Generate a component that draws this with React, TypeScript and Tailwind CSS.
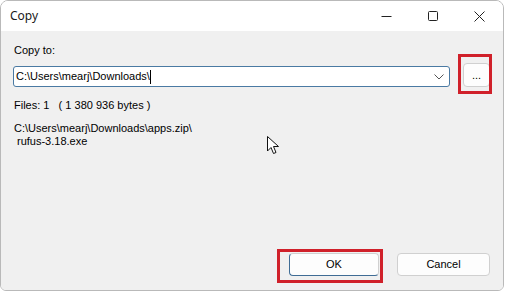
import React from "react";

export default function App() {
  const font = { fontFamily: '"Liberation Sans", Arial, sans-serif' };
  return (
    <div className="w-[506px] h-[292px] bg-white relative overflow-hidden" style={font}>
      <div className="absolute left-0 top-0 w-[504px] h-[291px] border border-[#b9b9b9] rounded-t-[8px] rounded-b-[6px] flex flex-col overflow-hidden">
        {/* title bar */}
        <div className="h-[30px] bg-white flex items-center shrink-0">
          <span className="ml-[9px] text-[12px] text-[#1a1a1a]" style={{ fontFamily: '"Noto Sans", "Open Sans", sans-serif' }}>Copy</span>
          <div className="ml-auto flex items-center h-full">
            <div className="w-[46px] h-full flex items-center justify-center">
              <svg width="11" height="11" viewBox="0 0 11 11"><path d="M0.5 5.5H10.5" stroke="#222" strokeWidth="1" /></svg>
            </div>
            <div className="w-[46px] h-full flex items-center justify-center ml-[1px]">
              <svg width="10" height="10" viewBox="0 0 10 10"><rect x="0.5" y="0.5" width="9" height="9" rx="1" fill="none" stroke="#222" strokeWidth="1" /></svg>
            </div>
            <div className="w-[46px] h-full flex items-center justify-center mr-[1px]">
              <svg width="11" height="11" viewBox="0 0 11 11"><path d="M0.5 0.5L10.5 10.5M10.5 0.5L0.5 10.5" stroke="#222" strokeWidth="1" /></svg>
            </div>
          </div>
        </div>
        {/* body */}
        <div className="flex-1 bg-[#f0f0f0] flex flex-col pl-[12px] pr-[13px] pt-[12px] text-[11px] text-black leading-[15px]">
          <div className="pl-[1px]">Copy to:</div>
          <div className="flex items-start mt-[5px]">
            <div className="mt-[3px] w-[439px] h-[21px] bg-white border border-[#4a7aa3] rounded-[3px] flex items-center pl-[2px]">
              <span className="text-[11px]">C:\Users\mearj\Downloads\</span>
              <span className="w-[1px] h-[14px] bg-black"></span>
              <svg className="ml-auto mr-[5px]" width="10" height="6" viewBox="0 0 10 6"><path d="M0.5 0.5L5 5L9.5 0.5" fill="none" stroke="#555" strokeWidth="1" /></svg>
            </div>
            <div className="ml-[13px] w-[27px] h-[24px] bg-[#fdfdfd] border border-[#d0d0d0] rounded-[4px] flex items-center justify-center text-[11px]">...</div>
          </div>
          <div className="mt-[11px] pl-[1px] whitespace-pre">Files: 1   ( 1 380 936 bytes )</div>
          <div className="mt-[8px] pl-[1px]">C:\Users\mearj\Downloads\apps.zip\</div>
          <div className="pl-[4px] -mt-[2px]">rufus-3.18.exe</div>
          <div className="mt-auto mb-[14px] flex justify-end gap-[18px] pr-[0px]">
            <div className="w-[90px] h-[23px] bg-[#fdfdfd] border border-[#d0d0d0] border-l-[#3f6c95] border-b-[#3f6c95] rounded-[4px] flex items-center justify-center">OK</div>
            <div className="w-[93px] h-[23px] bg-[#fdfdfd] border border-[#d0d0d0] rounded-[4px] flex items-center justify-center">Cancel</div>
          </div>
        </div>
      </div>
      {/* annotation boxes */}
      <div className="absolute left-[458px] top-[54px] w-[34px] h-[40px] border-[3px] border-[#d0202a]"></div>
      <div className="absolute left-[277px] top-[249px] w-[106px] h-[34px] border-[3px] border-[#d0202a]"></div>
      {/* cursor */}
      <svg className="absolute left-[267px] top-[136px]" width="14" height="20" viewBox="0 0 14 20">
        <path d="M0.5 0.5V15L4 11.5L6.5 17.5L9 16.5L6.5 10.5H11.5Z" fill="white" stroke="#111" strokeWidth="1" strokeLinejoin="round" />
      </svg>
    </div>
  );
}
